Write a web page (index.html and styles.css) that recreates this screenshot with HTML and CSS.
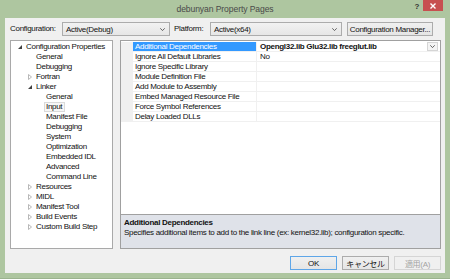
FILE: index.html
```html
<!DOCTYPE html>
<html lang="en">
<head>
  <meta charset="UTF-8" />
  <title>debunyan Property Pages</title>
  <link rel="stylesheet" href="styles.css">
</head>
<body>
  <div class="window">

    <!-- TITLE BAR -->
    <div class="titlebar">
      <span></span>
      <span class="title">debunyan Property Pages</span>
      <div class="caption-btns">
        <span class="help">?</span>
        <span class="close">
          <svg width="6" height="6" viewBox="0 0 6 6"><path d="M0.5 0.5 L5.5 5.5 M5.5 0.5 L0.5 5.5" stroke="#fff" stroke-width="1.4"/></svg>
        </span>
      </div>
    </div>

    <div class="client">

      <!-- CONFIGURATION ROW -->
      <div class="config-row">
        <span class="lbl lbl-config">Configuration:</span>
        <div class="combo combo-config">
          <span>Active(Debug)</span>
          <svg class="chev" width="5" height="3" viewBox="0 0 5 3"><path d="M0.3 0.3 L2.5 2.6 L4.7 0.3" fill="none" stroke="#555" stroke-width="0.9"/></svg>
        </div>
        <span class="lbl lbl-platform">Platform:</span>
        <div class="combo combo-platform">
          <span>Active(x64)</span>
          <svg class="chev" width="5" height="3" viewBox="0 0 5 3"><path d="M0.3 0.3 L2.5 2.6 L4.7 0.3" fill="none" stroke="#555" stroke-width="0.9"/></svg>
        </div>
        <div class="btn btn-manager">Configuration Manager...</div>
      </div>

      <div class="main">

        <!-- TREE -->
        <div class="tree">
          <div class="node lvl0"><span class="twisty"><svg width="6" height="6" viewBox="0 0 6 6"><polygon points="5,1 5,5 1,5" fill="#404040"/></svg></span>Configuration Properties</div>
          <div class="node lvl1"><span class="twisty"></span>General</div>
          <div class="node lvl1"><span class="twisty"></span>Debugging</div>
          <div class="node lvl1"><span class="twisty"><svg width="6" height="6" viewBox="0 0 6 6"><polygon points="1.5,0.5 4.5,3 1.5,5.5" fill="none" stroke="#a6a6a6" stroke-width="0.8"/></svg></span>Fortran</div>
          <div class="node lvl1"><span class="twisty"><svg width="6" height="6" viewBox="0 0 6 6"><polygon points="5,1 5,5 1,5" fill="#404040"/></svg></span>Linker</div>
          <div class="node lvl2"><span class="twisty"></span>General</div>
          <div class="node lvl2"><span class="twisty"></span><span class="selected">Input</span></div>
          <div class="node lvl2"><span class="twisty"></span>Manifest File</div>
          <div class="node lvl2"><span class="twisty"></span>Debugging</div>
          <div class="node lvl2"><span class="twisty"></span>System</div>
          <div class="node lvl2"><span class="twisty"></span>Optimization</div>
          <div class="node lvl2"><span class="twisty"></span>Embedded IDL</div>
          <div class="node lvl2"><span class="twisty"></span>Advanced</div>
          <div class="node lvl2"><span class="twisty"></span>Command Line</div>
          <div class="node lvl1"><span class="twisty"><svg width="6" height="6" viewBox="0 0 6 6"><polygon points="1.5,0.5 4.5,3 1.5,5.5" fill="none" stroke="#a6a6a6" stroke-width="0.8"/></svg></span>Resources</div>
          <div class="node lvl1"><span class="twisty"><svg width="6" height="6" viewBox="0 0 6 6"><polygon points="1.5,0.5 4.5,3 1.5,5.5" fill="none" stroke="#a6a6a6" stroke-width="0.8"/></svg></span>MIDL</div>
          <div class="node lvl1"><span class="twisty"><svg width="6" height="6" viewBox="0 0 6 6"><polygon points="1.5,0.5 4.5,3 1.5,5.5" fill="none" stroke="#a6a6a6" stroke-width="0.8"/></svg></span>Manifest Tool</div>
          <div class="node lvl1"><span class="twisty"><svg width="6" height="6" viewBox="0 0 6 6"><polygon points="1.5,0.5 4.5,3 1.5,5.5" fill="none" stroke="#a6a6a6" stroke-width="0.8"/></svg></span>Build Events</div>
          <div class="node lvl1"><span class="twisty"><svg width="6" height="6" viewBox="0 0 6 6"><polygon points="1.5,0.5 4.5,3 1.5,5.5" fill="none" stroke="#a6a6a6" stroke-width="0.8"/></svg></span>Custom Build Step</div>
        </div>

        <!-- PROPERTY GRID -->
        <div class="props">
          <div class="grid">
            <div class="row active">
              <span class="gutter"></span>
              <span class="name">Additional Dependencies</span>
              <span class="value">
                <b>Opengl32.lib Glu32.lib freeglut.lib</b>
                <span class="drop"><svg width="5" height="3" viewBox="0 0 5 3"><path d="M0.3 0.3 L2.5 2.6 L4.7 0.3" fill="none" stroke="#555" stroke-width="0.9"/></svg></span>
              </span>
            </div>
            <div class="row"><span class="gutter"></span><span class="name">Ignore All Default Libraries</span><span class="value">No</span></div>
            <div class="row"><span class="gutter"></span><span class="name">Ignore Specific Library</span><span class="value"></span></div>
            <div class="row"><span class="gutter"></span><span class="name">Module Definition File</span><span class="value"></span></div>
            <div class="row"><span class="gutter"></span><span class="name">Add Module to Assembly</span><span class="value"></span></div>
            <div class="row"><span class="gutter"></span><span class="name">Embed Managed Resource File</span><span class="value"></span></div>
            <div class="row"><span class="gutter"></span><span class="name">Force Symbol References</span><span class="value"></span></div>
            <div class="row"><span class="gutter"></span><span class="name">Delay Loaded DLLs</span><span class="value"></span></div>
          </div>
          <div class="desc">
            <div class="desc-title">Additional Dependencies</div>
            <div>Specifies additional items to add to the link line (ex: kernel32.lib); configuration specific.</div>
          </div>
        </div>
      </div>

      <!-- DIALOG BUTTONS -->
      <div class="buttons">
        <div class="btn btn-default">OK</div>
        <div class="btn">キャンセル</div>
        <div class="btn btn-disabled">適用(A)</div>
      </div>
    </div>
  </div>
</body>
</html>
```

FILE: styles.css
```css
/* Reset & basics */
*, *::before, *::after {
  box-sizing: border-box;
}
body {
  margin: 0;
  font-family: "Liberation Sans", "Noto Sans CJK JP", sans-serif;
  font-size: 8px;
  letter-spacing: -0.3px;
  color: #111;
  background: #fff;
}

/* WINDOW FRAME */
.window {
  width: 450px;
  height: 279px;
  background: #aec6a0;
  border-bottom: 1px solid #9bb38e;
  display: flex;
  flex-direction: column;
}
.titlebar {
  height: 18px;
  display: grid;
  grid-template-columns: 1fr auto 1fr;
  align-items: start;
}
.title {
  font-size: 8.6px;
  letter-spacing: -0.1px;
  color: #4a4a4a;
  line-height: 18px;
}
.caption-btns {
  display: flex;
  justify-content: flex-end;
  align-items: flex-start;
  padding-right: 7px;
  gap: 4px;
}
.help {
  font-size: 8px;
  font-weight: bold;
  color: #333;
  line-height: 11px;
  margin-top: 1px;
}
.close {
  width: 20px;
  height: 11px;
  background: #c75050;
  display: flex;
  align-items: center;
  justify-content: center;
}

/* CLIENT AREA */
.client {
  flex: 1;
  margin: 0 5px 5px 5px;
  background: #f0f0f0;
  padding: 4px 4px 3px 5px;
  display: flex;
  flex-direction: column;
}
.config-row {
  height: 14px;
  display: flex;
  align-items: center;
  white-space: nowrap;
}
.lbl {
  line-height: 14px;
}
.lbl-config {
  width: 52px;
}
.lbl-platform {
  width: 36px;
  margin-left: 4px;
}
.combo {
  height: 14px;
  border: 1px solid #acacac;
  background: linear-gradient(#f2f2f2, #e6e6e6);
  display: flex;
  align-items: center;
  justify-content: space-between;
  padding: 0 4px 0 3px;
}
.combo-config {
  width: 108px;
}
.combo-platform {
  width: 132px;
}
.chev {
  display: block;
}
.btn {
  height: 14px;
  width: 47px;
  border: 1px solid #acacac;
  background: linear-gradient(#f0f0f0, #e5e5e5);
  display: flex;
  align-items: center;
  justify-content: center;
  white-space: nowrap;
}
.btn-manager {
  width: 86px;
  margin-left: 5px;
}

/* MAIN AREA */
.main {
  margin-top: 4px;
  height: 209px;
  display: flex;
  gap: 7px;
}

/* TREE */
.tree {
  width: 103px;
  background: #fff;
  border: 1px solid #a9a9a9;
  padding-top: 1px;
}
.node {
  height: 10px;
  line-height: 10px;
  display: flex;
  align-items: center;
  white-space: nowrap;
}
.lvl0 { padding-left: 5px; }
.lvl1 { padding-left: 15px; }
.lvl2 { padding-left: 25px; }
.twisty {
  width: 10px;
  height: 10px;
  display: flex;
  align-items: center;
  padding-left: 1px;
}
.selected {
  border: 1px solid #dadada;
  background: #f7f7f7;
  margin-left: -2px;
  padding: 0 2px 0 1px;
  line-height: 8px;
}

/* PROPERTY GRID */
.props {
  width: 321px;
  display: flex;
  flex-direction: column;
}
.grid {
  flex: 1;
  background: #fff;
  border: 1px solid #a0a0a0;
  border-bottom: none;
  padding-top: 1px;
}
.row {
  height: 10px;
  display: grid;
  grid-template-columns: 12px 124px 1fr;
  line-height: 9px;
}
.gutter {
  background: #f0f0f0;
}
.name {
  padding-left: 2px;
  border-right: 1px solid #f0f0f0;
  border-bottom: 1px solid #f0f0f0;
  white-space: nowrap;
}
.value {
  padding-left: 3px;
  border-bottom: 1px solid #f0f0f0;
  display: flex;
  justify-content: space-between;
  align-items: center;
  white-space: nowrap;
}
.row.active .name {
  background: #3399ff;
  color: #fff;
}
.drop {
  width: 11px;
  height: 9px;
  margin-right: 2px;
  border: 1px solid #d5d5d5;
  background: #f4f4f4;
  display: flex;
  align-items: center;
  justify-content: center;
}
.desc {
  height: 35px;
  background: #dfe2e9;
  border: 1px solid #a0a0a0;
  padding: 3px 3px 0;
  line-height: 10px;
  white-space: nowrap;
}
.desc-title {
  font-weight: bold;
}

/* DIALOG BUTTONS */
.buttons {
  margin-top: 7px;
  display: flex;
  justify-content: flex-end;
  gap: 5px;
}
.btn-default {
  border-color: #5ea6e8;
}
.btn-disabled {
  color: #a3a3a3;
  border-color: #d5d5d5;
  background: #f0f0f0;
}
```
